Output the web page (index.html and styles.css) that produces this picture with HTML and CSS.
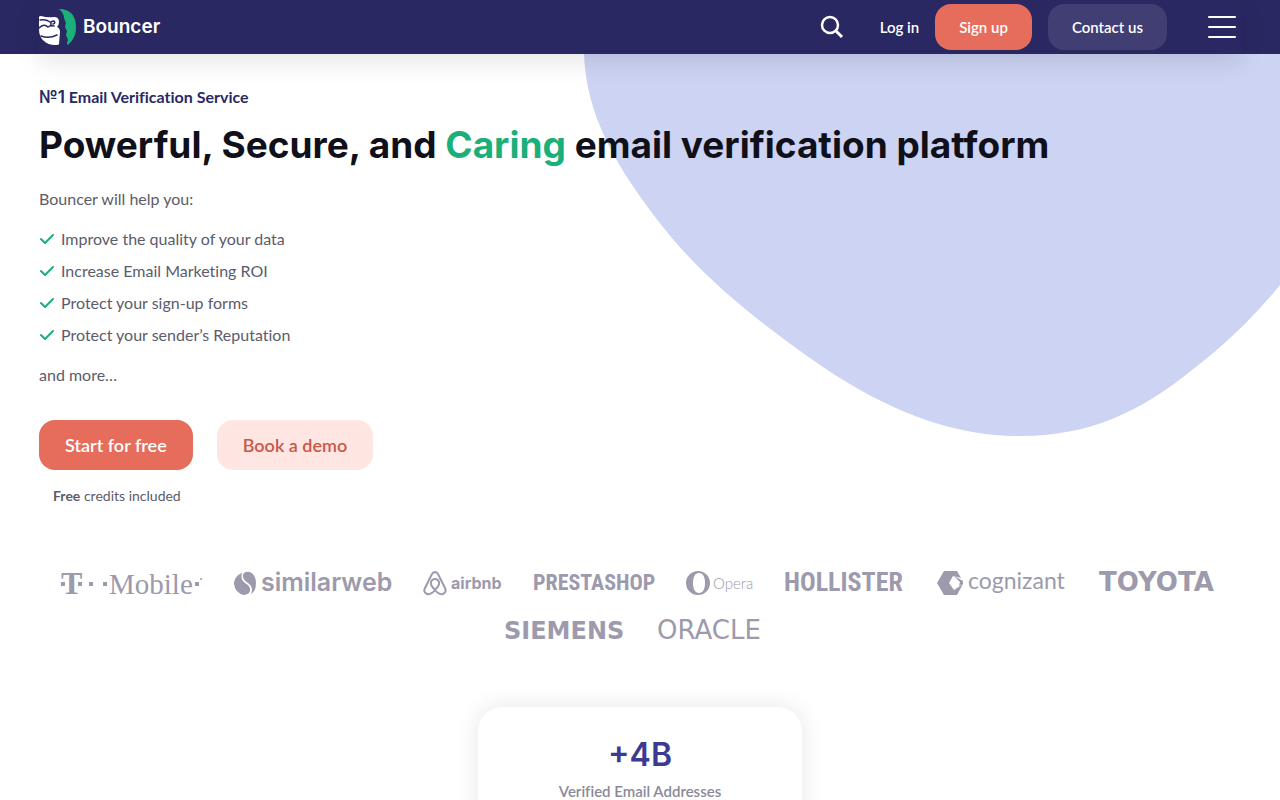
FILE: index.html
```html
<!DOCTYPE html>
<html lang="en">
<head>
<meta charset="utf-8">
<meta name="viewport" content="width=device-width, initial-scale=1">
<title>Bouncer – Email Verification</title>
<link rel="stylesheet" href="styles.css">
</head>
<body>
<header class="topbar">
  <div class="topbar-inner">
    <a class="brand" href="#">
      <svg class="brand-mark" viewBox="0 0 38 38" aria-hidden="true">
        <path fill="#fff" d="M0 9Q0 8 2 8Q9 10 15 9Q20 9 20 14Q20 17 18 19Q21 20 21 24L20 36Q20 37 16 37Q9 37 5 33Q0 29 0 21Z"/>
        <path fill="none" stroke="#2a2862" stroke-width="1.500" stroke-linecap="round" d="M1 12Q7 11 11 14M0 20Q5 15 9 19Q12 17 15 18M2 28Q10 31 18 27M12 17Q11 13 15 13Q17 15 14 16"/>
        <path fill="#1baf7a" d="M20 1Q37 1 37 20Q37 30 29 37Q27 36 29 32L27 27L28 23L26 19L27 15L25 10Q25 5 20 1Z"/>
      </svg>
      <span>Bouncer</span>
    </a>
    <nav class="actions" aria-label="Main">
      <button class="icon-button search" aria-label="Search">
        <svg viewBox="0 0 24 24" width="24" height="24" aria-hidden="true"><circle cx="10" cy="10" r="8" fill="none" stroke="#fff" stroke-width="2.500"/><path d="M15 15l7 7" stroke="#fff" stroke-width="3"/></svg>
      </button>
      <a class="login" href="#">Log in</a>
      <a class="pill signup" href="#">Sign up</a>
      <a class="pill contact" href="#">Contact us</a>
      <button class="icon-button menu" aria-label="Menu"><span></span><span></span><span></span></button>
    </nav>
  </div>
</header>

<main>
  <svg class="blob" viewBox="0 0 700 384" width="700" height="384" aria-hidden="true">
    <path fill="#ccd3f3" d="M4 0C6 60 35 112 83 173C130 233 200 284 255 321C320 362 378 382 440 382C510 382 560 358 612 316C648 289 678 258 700 231V0Z"/>
  </svg>
  <section class="hero">
    <p class="kicker"><span class="numero">№1</span> Email Verification Service</p>
    <h1>Powerful, Secure, and <em>Caring</em> email verification platform</h1>
    <p class="copy">Bouncer will help you:</p>
    <ul class="benefits">
      <li><svg viewBox="0 0 16 12" aria-hidden="true"><path d="M2 6l4 4 8-8"/></svg>Improve the quality of your data</li>
      <li><svg viewBox="0 0 16 12" aria-hidden="true"><path d="M2 6l4 4 8-8"/></svg>Increase Email Marketing ROI</li>
      <li><svg viewBox="0 0 16 12" aria-hidden="true"><path d="M2 6l4 4 8-8"/></svg>Protect your sign-up forms</li>
      <li><svg viewBox="0 0 16 12" aria-hidden="true"><path d="M2 6l4 4 8-8"/></svg>Protect your sender’s Reputation</li>
    </ul>
    <p class="copy">and more…</p>
    <div class="cta">
      <a class="button primary" href="#">Start for free</a>
      <a class="button soft" href="#">Book a demo</a>
    </div>
    <p class="note"><strong>Free</strong> credits included</p>
  </section>

  <section class="logos" aria-label="Customers">
    <svg width="141" height="24" viewBox="0 0 141 24"><text class="serif bold" x="0" y="23" font-size="32">T</text><path d="M0 11h4v4H0zM17 11h4v4h-4zM28 11h4v4h-4zM42 11h4v4h-4zM134 11h4v4h-4z"/><text class="serif" x="48" y="23" font-size="29">Mobile</text><circle cx="140" cy="8" r="1"/></svg>
    <svg width="157" height="24" viewBox="0 0 157 24"><path d="M8 2C3 4 0 8 0 13Q1 22 10 24Q17 23 16 18Q16 15 11 12Q6 8 8 2ZM16 1Q9 0 9 5Q9 9 14 12Q20 16 17 23Q22 20 22 12Q22 4 16 1Z"/><text class="inter semibold" x="27" y="20" font-size="25">similarweb</text></svg>
    <svg width="78" height="24" viewBox="0 0 78 24"><path class="line" d="M12 19Q7 14 8 11Q9 8 12 8Q15 8 16 11Q17 14 12 19Q8 24 4 23Q0 21 2 17L9 3Q12 -1 15 3L22 17Q24 21 20 23Q16 24 12 19Z"/><text class="inter bold" x="28" y="18" font-size="16">airbnb</text></svg>
    <svg width="121" height="24" viewBox="0 0 121 24"><text class="narrow bold" x="0" y="19" font-size="22">PRESTASHOP</text></svg>
    <svg width="66" height="24" viewBox="0 0 66 24"><path fill-rule="evenodd" d="M12 0a12 12 0 1 0 0 24a12 12 0 1 0 0-24ZM13 2C17 2 19 6 19 12S17 22 13 22S7 18 7 12S9 2 13 2Z"/><text class="lato" x="27" y="18" font-size="15">Opera</text></svg>
    <svg width="121" height="24" viewBox="0 0 121 24"><text class="narrow bold" x="0" y="20" font-size="26">HOLLISTER</text></svg>
    <svg width="130" height="24" viewBox="0 0 130 24"><path fill-rule="evenodd" d="M7 0H20L24 7L16 5L12 12L17 19L26 13L20 24H7L0 12Z"/><path d="M17 5L26 10V13L22 15L23 11Z"/><text class="lato regular" x="31" y="18" font-size="23">cognizant</text></svg>
    <svg width="120" height="24" viewBox="0 0 120 24"><text class="wide bold" x="0" y="20" font-size="26">TOYOTA</text></svg>
    <svg width="121" height="24" viewBox="0 0 121 24"><text class="wide bold" x="0" y="20" font-size="24">SIEMENS</text></svg>
    <svg width="120" height="24" viewBox="0 0 120 24"><text class="wide" x="0" y="20" font-size="26">ORACLE</text></svg>
  </section>

  <section class="stats">
    <article class="stat"><strong>+4B</strong><span>Verified Email Addresses</span></article>
  </section>
</main>
</body>
</html>
```
FILE: styles.css
```css
* { box-sizing: border-box; }
body {
  margin: 0;
  overflow-x: hidden;
  background: #fff;
  color: #5c5b6b;
  font: 16px/24px Lato, "Open Sans", sans-serif;
  font-variant-ligatures: none;
}
a { text-decoration: none; }
p, h1, ul { margin: 0; }

.topbar { position: relative; z-index: 2; padding: 0 39px; background: #2a2862; }
.topbar-inner {
  display: flex; align-items: center; justify-content: space-between;
  height: 54px;
  box-shadow: 0 8px 24px rgba(0, 0, 0, .1);
}
.brand {
  display: flex; align-items: center; gap: 6px;
  color: #fff; font: 600 19px/24px Inter, sans-serif;
}
.brand-mark { width: 38px; height: 38px; }
.actions { display: flex; align-items: center; font-size: 15px; font-weight: 600; line-height: 22px; }
.actions a { color: #fff; }
.icon-button { padding: 0; border: 0; background: none; cursor: pointer; }
.search { display: flex; margin-right: 36px; }
.login { margin-right: 16px; }
.pill { padding: 12px 24px; border-radius: 16px; }
.signup { margin-right: 16px; background: #e66c5c; }
.contact { margin-right: 41px; background: #403e72; }
.menu { display: flex; flex-direction: column; gap: 8px; width: 30px; margin-right: 3px; }
.menu span { width: 28px; height: 2px; border-radius: 1px; background: #fff; }

main { position: relative; }
.blob { position: absolute; top: 0; right: 0; z-index: -1; }
.hero { padding: 31px 39px 0; }
.kicker { color: #2a2862; font-weight: bold; }
.numero { font-family: Inter, sans-serif; font-size: 17px; font-weight: 600; }
h1 { margin-top: 12px; color: #10101a; font: bold 37px/48px Inter, sans-serif; }
h1 em { color: #1baf7a; font-style: normal; }
.copy { margin-top: 18px; }
.benefits { margin: 16px 0; padding: 0; list-style: none; }
.benefits li { display: flex; align-items: center; gap: 6px; margin-bottom: 8px; }
.benefits svg { width: 16px; height: 12px; fill: none; stroke: #1baf7a; stroke-width: 2; stroke-linecap: round; stroke-linejoin: round; }
.benefits + .copy { margin-top: 0; }
.cta { display: flex; gap: 24px; margin-top: 33px; }
.button { padding: 13px 26px; border-radius: 16px; font-size: 18px; font-weight: 600; }
.primary { background: #e66c5c; color: #fff; }
.soft { background: #ffe6e2; color: #c95848; }
.note { margin: 14px 14px 0; font-size: 14px; }

.logos {
  display: flex; flex-wrap: wrap; justify-content: center; gap: 24px 32px;
  padding: 63px 39px 0;
  fill: #9c9aac;
}
.logos svg { overflow: visible; }
.line { fill: none; stroke: #9c9aac; stroke-width: 2; }
.serif { font-family: "Liberation Serif", serif; }
.inter { font-family: Inter, sans-serif; }
.lato { font-family: Lato, sans-serif; font-weight: 300; }
.regular { font-weight: 400; }
.semibold { font-weight: 600; }
.narrow { font-family: "Liberation Sans Narrow", "Roboto Condensed", "Open Sans Condensed", sans-serif; }
.wide { font-family: "DejaVu Sans", sans-serif; }
.bold { font-weight: bold; }

.stats { display: flex; justify-content: center; padding: 64px 39px 48px; }
.stat {
  display: flex; flex-direction: column; align-items: center; gap: 6px;
  width: 324px; padding: 28px 24px 40px;
  border-radius: 24px; background: #fff;
  box-shadow: 0 0 24px rgba(0, 0, 0, .1);
}
.stat strong { color: #3d3a94; font: 600 32px/40px Inter, sans-serif; }
.stat span { color: #8b8999; font-size: 15px; font-weight: 600; line-height: 20px; }
```
